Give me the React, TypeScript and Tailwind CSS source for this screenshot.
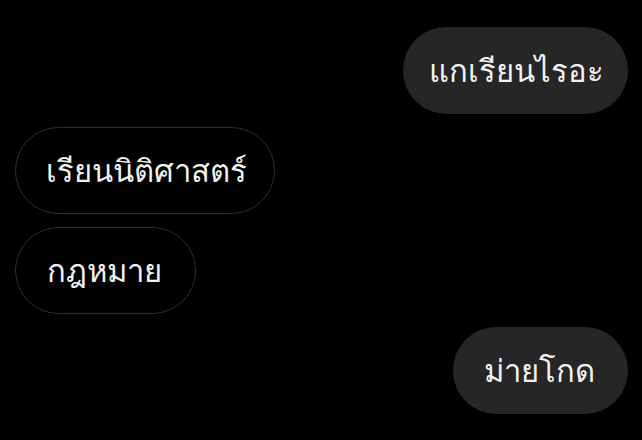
export default function App() {
  const bubble = "h-[87px] rounded-full flex items-center text-[31px] leading-none text-[#f2f2f2]";
  return (
    <div
      className="w-[642px] h-[440px] bg-black flex flex-col gap-[13px] pt-[27px] pl-[15px] pr-[14px]"
      style={{ fontFamily: '"Noto Sans", "DejaVu Sans", sans-serif' }}
    >
      <div className="flex justify-end">
        <div className={`${bubble} bg-[#262626] pl-[26px] pr-[24px]`}>แกเรียนไรอะ</div>
      </div>
      <div className="flex justify-start">
        <div className={`${bubble} border border-[#303030] pl-[30px] pr-[27px]`}>เรียนนิติศาสตร์</div>
      </div>
      <div className="flex justify-start">
        <div className={`${bubble} border border-[#303030] pl-[31px] pr-[33px]`}>กฎหมาย</div>
      </div>
      <div className="flex justify-end">
        <div className={`${bubble} bg-[#262626] pl-[31px] pr-[33px]`}>ม่ายโกด</div>
      </div>
    </div>
  );
}
